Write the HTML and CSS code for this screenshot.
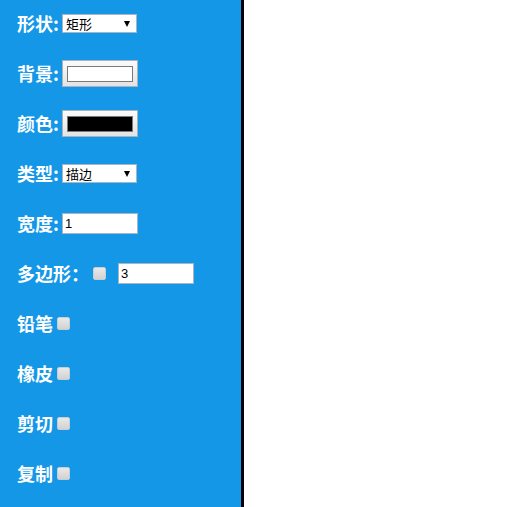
FILE: index.html
```html
<!DOCTYPE html>
<html lang="zh">
<head>
<meta charset="utf-8">
<title>画板</title>
<link rel="stylesheet" href="styles.css">
</head>
<body>
<div class="app">
  <div class="panel">
    <div class="row">
      <span class="lbl lbl-c">形状:</span>
      <span class="sel"><select class="select"><option>矩形</option><option>圆形</option><option>直线</option></select></span>
    </div>
    <div class="row">
      <span class="lbl lbl-c">背景:</span>
      <input class="color" type="color" value="#ffffff">
    </div>
    <div class="row">
      <span class="lbl lbl-c">颜色:</span>
      <input class="color" type="color" value="#000000">
    </div>
    <div class="row">
      <span class="lbl lbl-c">类型:</span>
      <span class="sel"><select class="select"><option>描边</option><option>填充</option></select></span>
    </div>
    <div class="row">
      <span class="lbl lbl-c">宽度:</span>
      <input class="text" type="text" value="1">
    </div>
    <div class="row">
      <span class="lbl">多边形：</span>
      <input class="check" type="checkbox">
      <input class="text text-poly" type="text" value="3">
    </div>
    <div class="row">
      <span class="lbl">铅笔</span>
      <input class="check" type="checkbox">
    </div>
    <div class="row">
      <span class="lbl">橡皮</span>
      <input class="check" type="checkbox">
    </div>
    <div class="row">
      <span class="lbl">剪切</span>
      <input class="check" type="checkbox">
    </div>
    <div class="row">
      <span class="lbl">复制</span>
      <input class="check" type="checkbox">
    </div>
  </div>
  <div class="canvas"></div>
</div>
</body>
</html>
```

FILE: styles.css
```css
html, body {
  margin: 0;
  padding: 0;
  background: #ffffff;
}

.app {
  display: flex;
  height: 507px;
}

.panel {
  width: 224px;
  height: 507px;
  box-sizing: border-box;
  background: #1597e8;
  border-right: 3px solid #020208;
  padding: 13px 0 0 17px;
  display: flex;
  flex-direction: column;
  gap: 30px;
  width: 244px;
  flex: none;
}

.canvas {
  flex: 1;
  background: #ffffff;
}

.row {
  display: flex;
  align-items: center;
  height: 20px;
}

.lbl {
  color: #ffffff;
  font-family: "Noto Sans CJK SC", sans-serif;
  font-weight: 700;
  font-size: 18px;
  line-height: 20px;
  white-space: nowrap;
}

.lbl-c {
  width: 45px;
  flex: none;
}

.sel {
  position: relative;
  display: inline-block;
}

.sel::after {
  content: "";
  position: absolute;
  right: 7px;
  top: 7px;
  border-left: 3.5px solid transparent;
  border-right: 3.5px solid transparent;
  border-top: 6px solid #000000;
  pointer-events: none;
}

.select {
  appearance: none;
  -webkit-appearance: none;
  display: block;
  width: 75px;
  height: 19px;
  box-sizing: border-box;
  margin: 0;
  padding: 0 0 0 3px;
  border: 1px solid #a7b6c4;
  border-radius: 0;
  background: #ffffff;
  color: #000000;
  font-family: "Noto Sans CJK SC", sans-serif;
  font-size: 13px;
  line-height: 17px;
}

.color {
  -webkit-appearance: none;
  appearance: none;
  display: block;
  width: 76px;
  height: 27px;
  box-sizing: border-box;
  margin: 0;
  padding: 0;
  border: 1px solid #a9b3bd;
  border-radius: 0;
  background: linear-gradient(#fbfbfb, #e3e3e3);
  cursor: pointer;
}

.color::-webkit-color-swatch-wrapper {
  padding: 5px 4px 4px 4px;
}

.color::-webkit-color-swatch {
  border: 1px solid #7a7a7a;
  border-radius: 0;
}

.text {
  display: block;
  width: 76px;
  height: 21px;
  box-sizing: border-box;
  margin: 0;
  padding: 0 2px;
  border: 1px solid #a7b6c4;
  border-radius: 0;
  background: #ffffff;
  color: #000000;
  font-family: "Liberation Sans", Arial, sans-serif;
  font-size: 13px;
  outline: none;
}

.text-poly {
  margin-left: 9px;
}

.check {
  -webkit-appearance: none;
  appearance: none;
  width: 13px;
  height: 13px;
  box-sizing: border-box;
  margin: 0 3px 0 4px;
  border: 1px solid #c6cdd3;
  border-radius: 2px;
  background: linear-gradient(#e9e9e9, #d2d2d2);
  flex: none;
}
```
